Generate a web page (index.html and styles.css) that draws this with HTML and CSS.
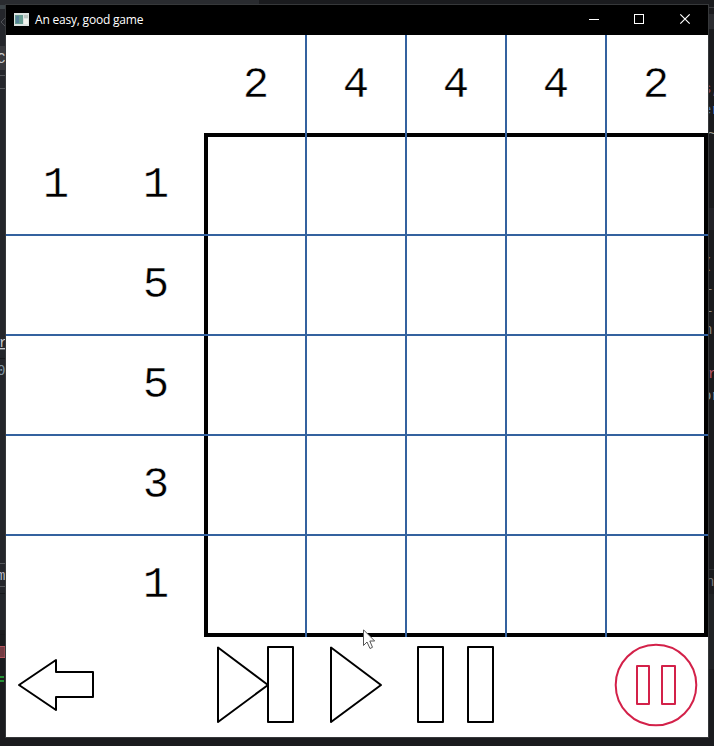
FILE: index.html
```
<!DOCTYPE html>
<html lang="en">
<head>
<meta charset="utf-8">
<title>An easy, good game</title>
<link rel="stylesheet" href="styles.css">
</head>
<body>
<svg class="desktop" width="714" height="746" viewBox="0 0 714 746" aria-hidden="true">
  <rect width="714" height="746" fill="#1a1b1e"/>
  <rect width="259" height="5" fill="#292b2f"/>
  <rect y="5" width="6" height="625" fill="#24262b"/>
  <rect y="5" width="6" height="4" fill="#3c4448"/>
  <rect y="46" width="6" height="24" fill="#38393d"/>
  <path d="M0 75.500h6M0 88.500h6M0 563.500h6M0 586.500h6" stroke="#54575b"/>
  <path d="M0 358.500h6M0 593.500h6M0 634.500h6" stroke="#17181b"/>
  <path d="M5 18L1 22L5 26" fill="none" stroke="#505257"/>
  <rect x="-1" y="646.500" width="6" height="11" fill="#743c43" stroke="#b4545c"/>
  <path d="M0 677h4M0 681h4" stroke="#28b83c" stroke-width="1.500"/>
  <rect x="708" y="14" width="6" height="15" fill="#2b2c30"/>
  <path d="M708 7.500h6" stroke="#3b3c40"/>
  <rect x="708" y="208" width="6" height="22" fill="#222227"/>
  <path d="M708 569.500h6M708 634.500h6" stroke="#2d2f32"/>
  <rect x="708" y="594" width="6" height="75" fill="#202225"/>
  <g class="code">
    <text x="-3" y="63" fill="#c8cacd">C</text>
    <text x="-1" y="347" fill="#c8cacd" text-decoration="underline">r</text>
    <text x="-3" y="375" fill="#8296a4">0</text>
    <text x="-3" y="580" fill="#b9bbc8">m</text>
    <text x="703" y="93" fill="#985564">s,</text>
    <text x="703" y="114" fill="#527bb8">er</text>
    <text x="708" y="138" fill="#a2a294">~</text>
    <text x="704" y="268" fill="#8b8178">(</text>
    <text x="704" y="290" fill="#8b8984">L'</text>
    <text x="704" y="312" fill="#8b8984">L'</text>
    <text x="704" y="334" fill="#8b8984">n</text>
    <text x="708" y="378" fill="#b85566">r</text>
    <text x="703" y="400" fill="#8798a2">or</text>
    <text x="706" y="586" fill="#77797c">n</text>
  </g>
</svg>
<main class="window">
  <header class="titlebar">
    <svg class="app-icon" width="15" height="13" viewBox="0 0 15 13">
      <rect width="15" height="13" fill="#dce3e1"/>
      <rect x="1" y="2" width="8" height="9" fill="#659c91"/>
      <rect x="2" y="3" width="3" height="7" fill="#588198"/>
      <rect x="10" y="2" width="4" height="3" fill="#bbc5c0"/>
      <rect x="10" y="6" width="4" height="5" fill="#f2f4ee"/>
    </svg>
    <h1 class="title">An easy, good game</h1>
    <svg class="controls" width="138" height="30" viewBox="0 0 138 30" fill="none" stroke="#fff">
      <path d="M19 14.500h10"/>
      <rect x="64.500" y="9.500" width="9" height="9"/>
      <path d="M110.300 9.300l9.400 9.400M119.700 9.300l-9.400 9.400" stroke-width="1.200"/>
    </svg>
  </header>
  <section class="board">
    <div class="row"><span></span><span></span><span>2</span><span>4</span><span>4</span><span>4</span><span>2</span></div>
    <div class="row"><span>1</span><span>1</span></div>
    <div class="row"><span></span><span>5</span></div>
    <div class="row"><span></span><span>5</span></div>
    <div class="row"><span></span><span>3</span></div>
    <div class="row"><span></span><span>1</span></div>
    <svg class="lines" width="702" height="602" viewBox="0 0 702 602" fill="none">
      <rect x="200" y="100" width="500" height="500" stroke="#000" stroke-width="4"/>
      <path d="M300 0V602M400 0V602M500 0V602M600 0V602M0 200H702M0 300H702M0 400H702M0 500H702" stroke="#34629f" stroke-width="2"/>
    </svg>
  </section>
  <footer class="toolbar">
    <svg width="702" height="100" viewBox="6 637 702 100" fill="none" stroke="#000" stroke-width="2" stroke-linejoin="round">
      <path d="M19 685L56 660V672H93V697H56V710Z"/>
      <path d="M218 647.500V722L268 685Z"/>
      <rect x="268" y="647" width="25" height="75"/>
      <path d="M331 647.500V722L381 685Z"/>
      <rect x="418" y="647" width="25" height="75"/>
      <rect x="468" y="647" width="25" height="75"/>
      <g stroke="#d32149">
        <circle cx="656" cy="685" r="40.300"/>
        <rect x="637" y="666" width="12" height="38"/>
        <rect x="662" y="666" width="13" height="38"/>
      </g>
    </svg>
  </footer>
</main>
<svg class="cursor" width="14" height="21" viewBox="0 0 14 21">
  <path d="M.5 .8V16.500L4 13L7 19.500L9.500 18.300L6.800 12H11.700Z" fill="#fff" stroke="#555" stroke-width="1"/>
</svg>
</body>
</html>
```
FILE: styles.css
```
* {
  box-sizing: border-box;
}

body {
  margin: 0;
  width: 714px;
  height: 746px;
  overflow: hidden;
  background: #1a1b1e;
}

svg {
  display: block;
}

.desktop {
  position: absolute;
  inset: 0;
}

.code {
  font: 14px "Liberation Mono", monospace;
}

.window {
  position: relative;
  width: 704px;
  height: 734px;
  margin: 4px 0 0 5px;
  border: 1px solid #36383a;
  background: #fff;
}

.titlebar {
  display: flex;
  align-items: center;
  height: 30px;
  padding-left: 8px;
  background: #000;
  color: #fff;
}

.app-icon {
  margin-bottom: 2px;
}

.title {
  margin: 0 auto 0 6px;
  font: 12px/30px "Open Sans", sans-serif;
  letter-spacing: -0.2px;
}

.board {
  position: relative;
  height: 602px;
}

.row {
  display: grid;
  grid-template-columns: repeat(7, 100px);
  height: 100px;
  font: 44px/100px "Liberation Mono", monospace;
  text-align: center;
  color: #000;
  -webkit-text-stroke: 0.4px #fff;
}

.lines {
  position: absolute;
  top: 0;
  left: 0;
}

.toolbar {
  height: 100px;
}

.cursor {
  position: absolute;
  left: 363px;
  top: 629px;
}
```
